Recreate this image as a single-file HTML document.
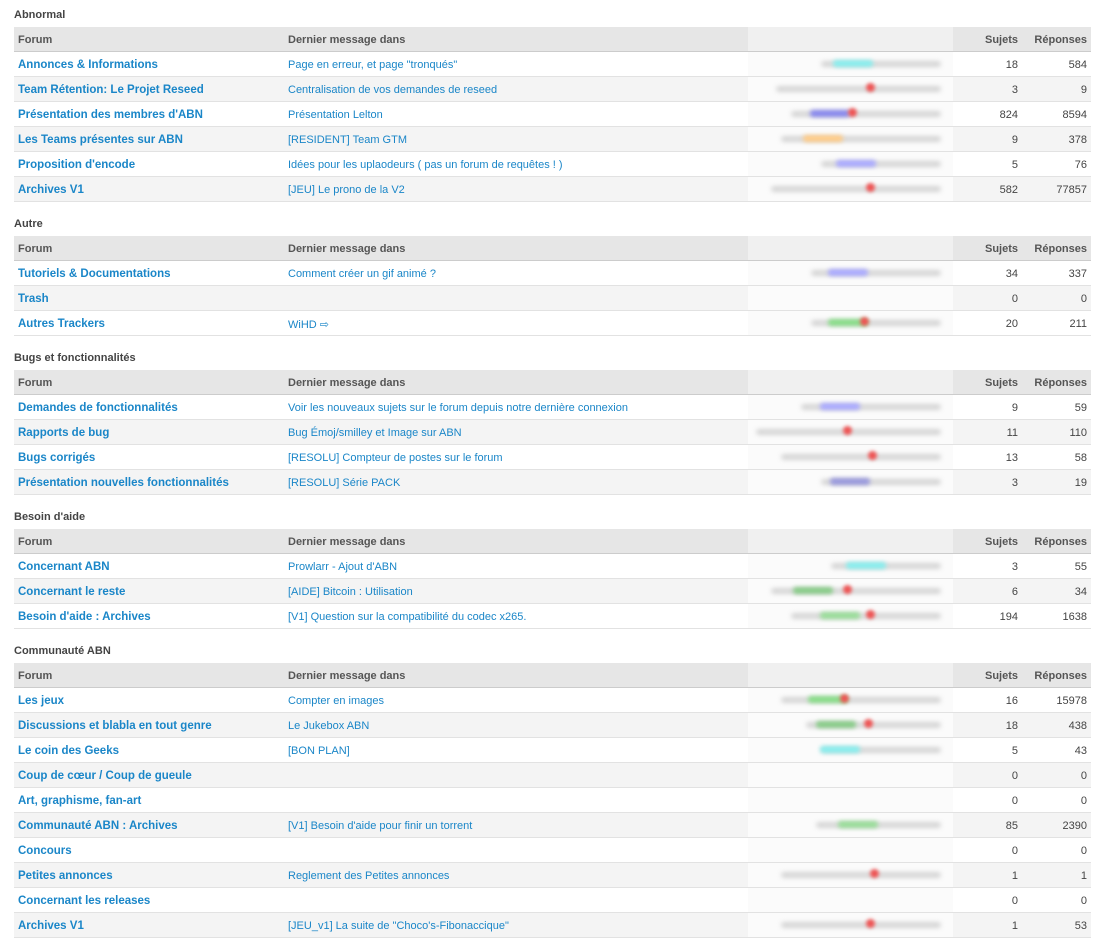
<!DOCTYPE html>
<html><head><meta charset="utf-8"><style>
*{box-sizing:border-box;margin:0;padding:0}
body{width:1106px;height:940px;background:#fff;font-family:"Liberation Sans",Arial,sans-serif;font-size:11px;color:#333;overflow:hidden;position:relative}
.s{position:absolute;left:14px;width:1077px}
.t{position:absolute;top:-18px;left:0;font-weight:bold;color:#444;font-size:11px;line-height:13px}
table{width:1077px;border-collapse:separate;border-spacing:0;table-layout:fixed}
td,th{height:25px;padding:2px 4px 0;border-bottom:1px solid #e2e2e2;white-space:nowrap;overflow:hidden}
th{height:25px;padding-top:2px;background:#e6e6e6;color:#555;font-weight:bold;text-align:left;font-size:11px;border-bottom:1px solid #ccc}
th.b{background:#f0f0f0}
th.n{text-align:right}
tr:nth-child(odd) td{background:#f4f4f4}
tr:nth-child(even) td{background:#fff}
td.f{color:#1a86c8;font-weight:bold;font-size:11.5px}
td.m{color:#1a86c8}
td.n{text-align:right;color:#444}
td.b{background:#fbfbfb!important;position:relative}
.bl{position:absolute;right:12px;top:9px;height:6px;width:120px;background:#ccc;filter:blur(2.5px);border-radius:3px;opacity:.8}
.c{position:absolute;top:8px;height:7px;width:40px;filter:blur(2px);border-radius:3px}
.d{position:absolute;top:6px;width:9px;height:9px;border-radius:50%;background:#e55;filter:blur(1.8px)}
</style></head><body>
<div class="s" style="top:27px"><div class="t">Abnormal</div>
<table><colgroup><col style="width:270px"><col style="width:464px"><col style="width:205px"><col style="width:69px"><col style="width:69px"></colgroup>
<tr><th>Forum</th><th>Dernier message dans</th><th class="b"></th><th class="n">Sujets</th><th class="n">Réponses</th></tr>
<tr><td class="f">Annonces &amp; Informations</td><td class="m">Page en erreur, et page "tronqués"</td><td class="b"><div class="bl"></div><div class="c" style="left:85px;background:#8ee"></div></td><td class="n">18</td><td class="n">584</td></tr>
<tr><td class="f">Team Rétention: Le Projet Reseed</td><td class="m">Centralisation de vos demandes de reseed</td><td class="b"><div class="bl" style="width:165px"></div><div class="d" style="left:118px"></div></td><td class="n">3</td><td class="n">9</td></tr>
<tr><td class="f">Présentation des membres d'ABN</td><td class="m">Présentation Lelton</td><td class="b"><div class="bl" style="width:150px"></div><div class="c" style="left:62px;background:#88e"></div><div class="d" style="left:100px"></div></td><td class="n">824</td><td class="n">8594</td></tr>
<tr><td class="f">Les Teams présentes sur ABN</td><td class="m">[RESIDENT] Team GTM</td><td class="b"><div class="bl" style="width:160px"></div><div class="c" style="left:55px;background:#fc8"></div></td><td class="n">9</td><td class="n">378</td></tr>
<tr><td class="f">Proposition d'encode</td><td class="m">Idées pour les uplaodeurs ( pas un forum de requêtes ! )</td><td class="b"><div class="bl"></div><div class="c" style="left:88px;background:#aaf"></div></td><td class="n">5</td><td class="n">76</td></tr>
<tr><td class="f">Archives V1</td><td class="m">[JEU] Le prono de la V2</td><td class="b"><div class="bl" style="width:170px"></div><div class="d" style="left:118px"></div></td><td class="n">582</td><td class="n">77857</td></tr>
</table></div>
<div class="s" style="top:236px"><div class="t">Autre</div>
<table><colgroup><col style="width:270px"><col style="width:464px"><col style="width:205px"><col style="width:69px"><col style="width:69px"></colgroup>
<tr><th>Forum</th><th>Dernier message dans</th><th class="b"></th><th class="n">Sujets</th><th class="n">Réponses</th></tr>
<tr><td class="f">Tutoriels &amp; Documentations</td><td class="m">Comment créer un gif animé ?</td><td class="b"><div class="bl" style="width:130px"></div><div class="c" style="left:80px;background:#aaf"></div></td><td class="n">34</td><td class="n">337</td></tr>
<tr><td class="f">Trash</td><td class="m"></td><td class="b"></td><td class="n">0</td><td class="n">0</td></tr>
<tr><td class="f">Autres Trackers</td><td class="m">WiHD ⇨</td><td class="b"><div class="bl" style="width:130px"></div><div class="c" style="left:80px;background:#8d8"></div><div class="d" style="left:112px"></div></td><td class="n">20</td><td class="n">211</td></tr>
</table></div>
<div class="s" style="top:370px"><div class="t">Bugs et fonctionnalités</div>
<table><colgroup><col style="width:270px"><col style="width:464px"><col style="width:205px"><col style="width:69px"><col style="width:69px"></colgroup>
<tr><th>Forum</th><th>Dernier message dans</th><th class="b"></th><th class="n">Sujets</th><th class="n">Réponses</th></tr>
<tr><td class="f">Demandes de fonctionnalités</td><td class="m">Voir les nouveaux sujets sur le forum depuis notre dernière connexion</td><td class="b"><div class="bl" style="width:140px"></div><div class="c" style="left:72px;background:#aaf"></div></td><td class="n">9</td><td class="n">59</td></tr>
<tr><td class="f">Rapports de bug</td><td class="m">Bug Émoj/smilley et Image sur ABN</td><td class="b"><div class="bl" style="width:185px"></div><div class="d" style="left:95px"></div></td><td class="n">11</td><td class="n">110</td></tr>
<tr><td class="f">Bugs corrigés</td><td class="m">[RESOLU] Compteur de postes sur le forum</td><td class="b"><div class="bl" style="width:160px"></div><div class="d" style="left:120px"></div></td><td class="n">13</td><td class="n">58</td></tr>
<tr><td class="f">Présentation nouvelles fonctionnalités</td><td class="m">[RESOLU] Série PACK</td><td class="b"><div class="bl" style="width:120px"></div><div class="c" style="left:82px;background:#99d"></div></td><td class="n">3</td><td class="n">19</td></tr>
</table></div>
<div class="s" style="top:529px"><div class="t">Besoin d'aide</div>
<table><colgroup><col style="width:270px"><col style="width:464px"><col style="width:205px"><col style="width:69px"><col style="width:69px"></colgroup>
<tr><th>Forum</th><th>Dernier message dans</th><th class="b"></th><th class="n">Sujets</th><th class="n">Réponses</th></tr>
<tr><td class="f">Concernant ABN</td><td class="m">Prowlarr - Ajout d'ABN</td><td class="b"><div class="bl" style="width:110px"></div><div class="c" style="left:98px;background:#8ee"></div></td><td class="n">3</td><td class="n">55</td></tr>
<tr><td class="f">Concernant le reste</td><td class="m">[AIDE] Bitcoin : Utilisation</td><td class="b"><div class="bl" style="width:170px"></div><div class="c" style="left:45px;background:#8c8"></div><div class="d" style="left:95px"></div></td><td class="n">6</td><td class="n">34</td></tr>
<tr><td class="f">Besoin d'aide : Archives</td><td class="m">[V1] Question sur la compatibilité du codec x265.</td><td class="b"><div class="bl" style="width:150px"></div><div class="c" style="left:72px;background:#9d9"></div><div class="d" style="left:118px"></div></td><td class="n">194</td><td class="n">1638</td></tr>
</table></div>
<div class="s" style="top:663px"><div class="t">Communauté ABN</div>
<table><colgroup><col style="width:270px"><col style="width:464px"><col style="width:205px"><col style="width:69px"><col style="width:69px"></colgroup>
<tr><th>Forum</th><th>Dernier message dans</th><th class="b"></th><th class="n">Sujets</th><th class="n">Réponses</th></tr>
<tr><td class="f">Les jeux</td><td class="m">Compter en images</td><td class="b"><div class="bl" style="width:160px"></div><div class="c" style="left:60px;background:#8d8"></div><div class="d" style="left:92px"></div></td><td class="n">16</td><td class="n">15978</td></tr>
<tr><td class="f">Discussions et blabla en tout genre</td><td class="m">Le Jukebox ABN</td><td class="b"><div class="bl" style="width:135px"></div><div class="c" style="left:68px;background:#8c8"></div><div class="d" style="left:116px"></div></td><td class="n">18</td><td class="n">438</td></tr>
<tr><td class="f">Le coin des Geeks</td><td class="m">[BON PLAN]</td><td class="b"><div class="bl" style="width:120px"></div><div class="c" style="left:72px;background:#8ee"></div></td><td class="n">5</td><td class="n">43</td></tr>
<tr><td class="f">Coup de cœur / Coup de gueule</td><td class="m"></td><td class="b"></td><td class="n">0</td><td class="n">0</td></tr>
<tr><td class="f">Art, graphisme, fan-art</td><td class="m"></td><td class="b"></td><td class="n">0</td><td class="n">0</td></tr>
<tr><td class="f">Communauté ABN : Archives</td><td class="m">[V1] Besoin d'aide pour finir un torrent</td><td class="b"><div class="bl" style="width:125px"></div><div class="c" style="left:90px;background:#9d9"></div></td><td class="n">85</td><td class="n">2390</td></tr>
<tr><td class="f">Concours</td><td class="m"></td><td class="b"></td><td class="n">0</td><td class="n">0</td></tr>
<tr><td class="f">Petites annonces</td><td class="m">Reglement des Petites annonces</td><td class="b"><div class="bl" style="width:160px"></div><div class="d" style="left:122px"></div></td><td class="n">1</td><td class="n">1</td></tr>
<tr><td class="f">Concernant les releases</td><td class="m"></td><td class="b"></td><td class="n">0</td><td class="n">0</td></tr>
<tr><td class="f">Archives V1</td><td class="m">[JEU_v1] La suite de "Choco's-Fibonaccique"</td><td class="b"><div class="bl" style="width:160px"></div><div class="d" style="left:118px"></div></td><td class="n">1</td><td class="n">53</td></tr>
</table></div>
</body></html>
